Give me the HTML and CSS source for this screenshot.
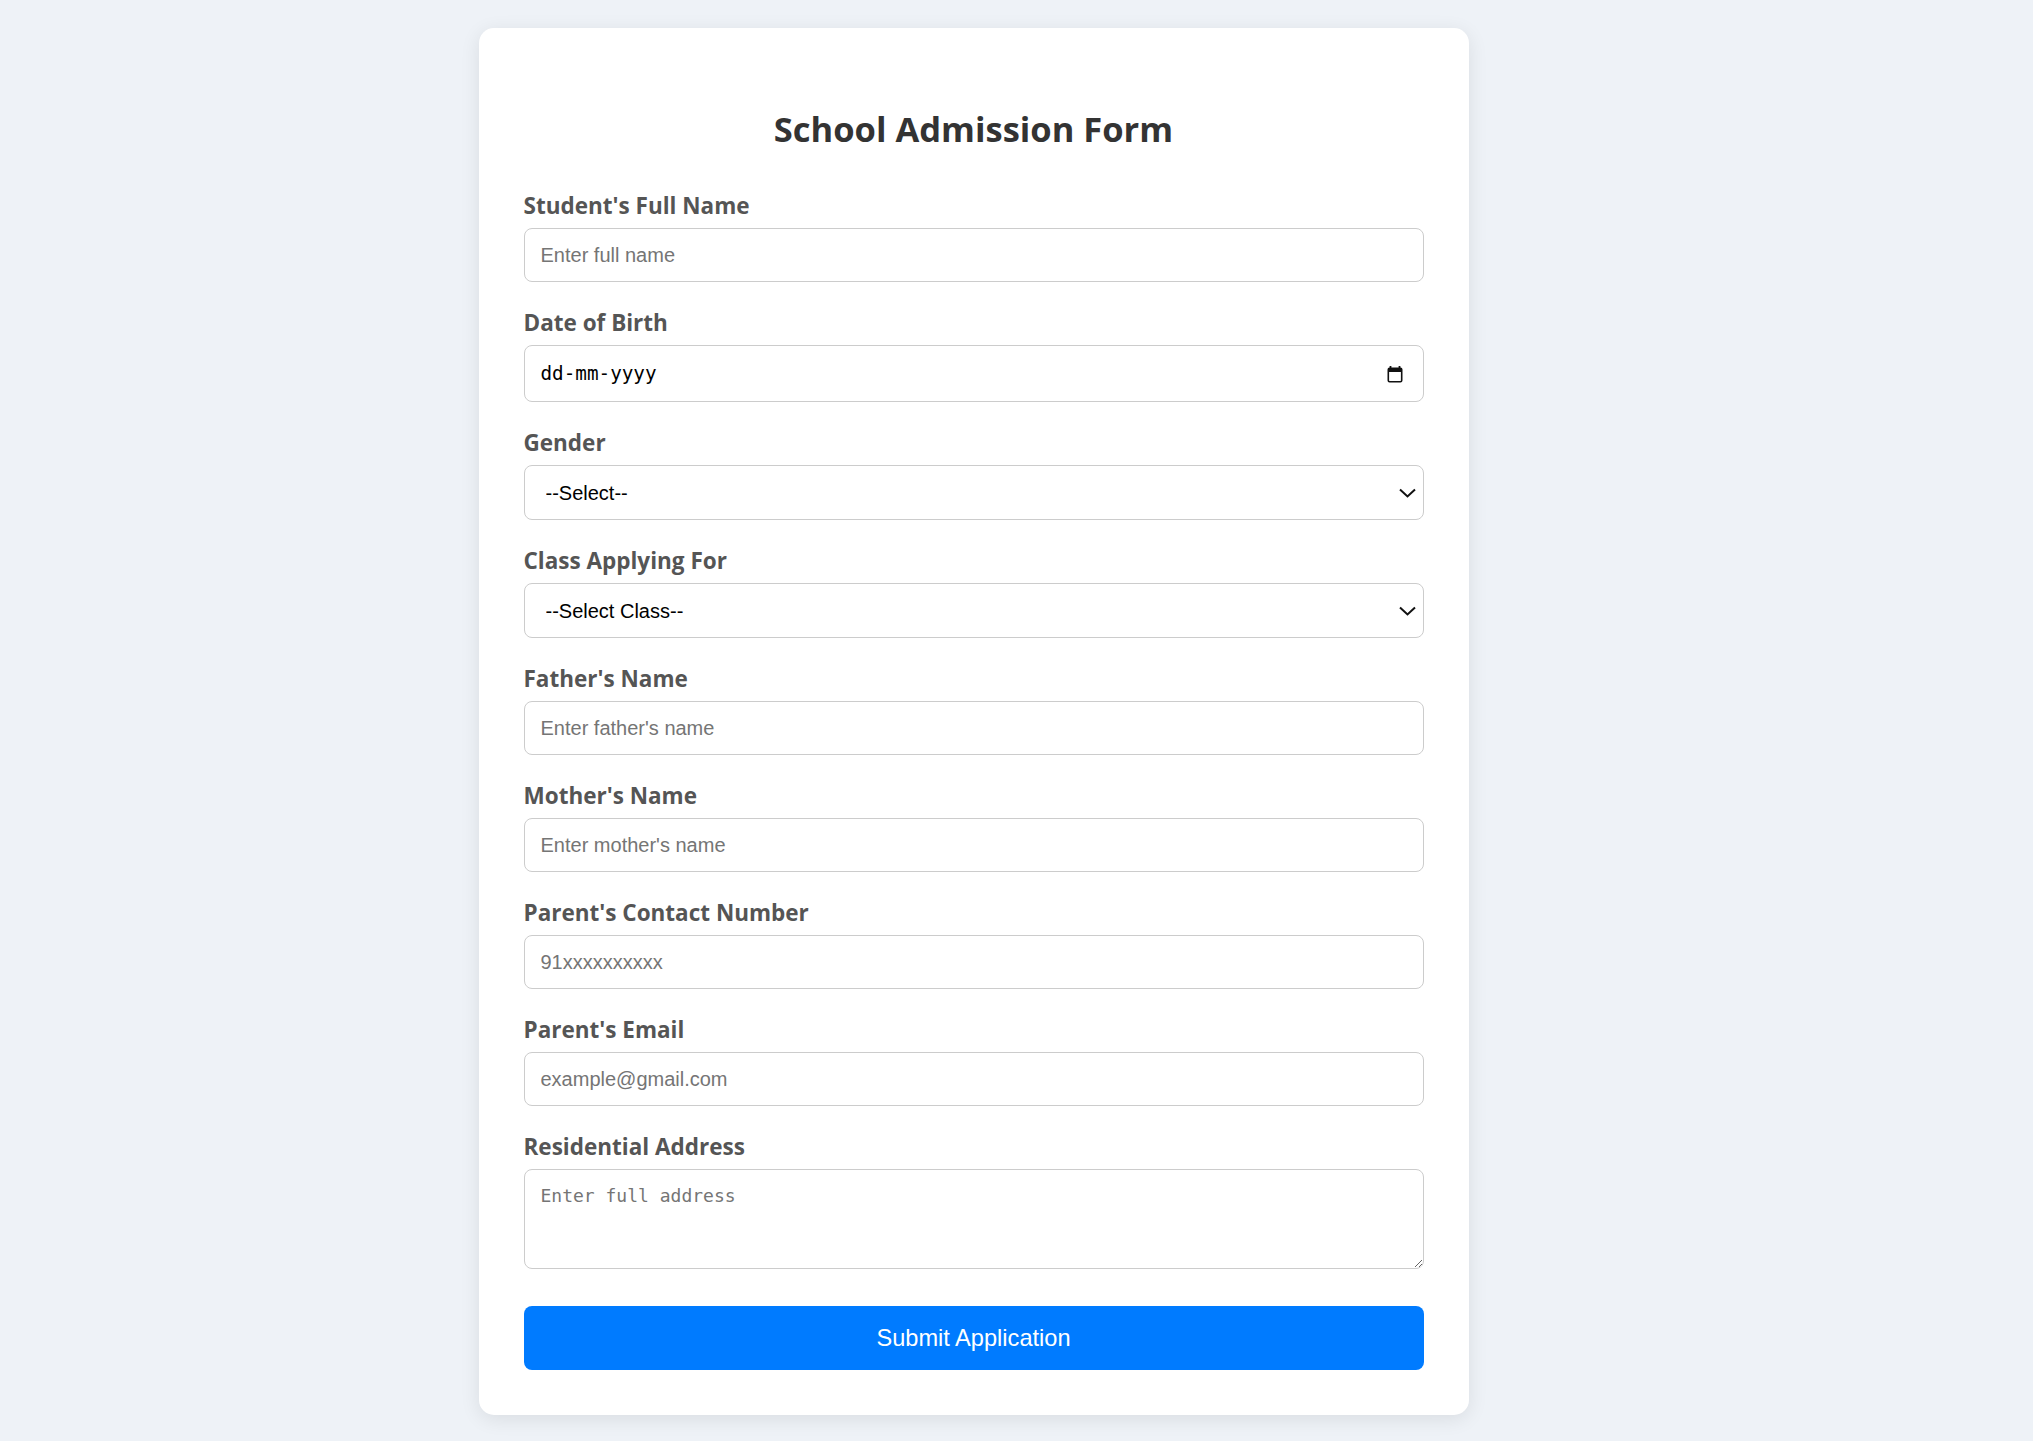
FILE: index.html
```html
<!DOCTYPE html>
<html lang="en">
<head>
<meta charset="utf-8">
<title>School Admission Form</title>
<link rel="stylesheet" href="styles.css">
</head>
<body>
<div class="card">
  <h2 class="title">School Admission Form</h2>
  <form class="form">
    <div class="group">
      <label class="label" for="name">Student's Full Name</label>
      <input class="field" id="name" type="text" placeholder="Enter full name">
    </div>
    <div class="group">
      <label class="label" for="dob">Date of Birth</label>
      <div class="wrap">
        <input class="field field-date" id="dob" type="text" placeholder="dd-mm-yyyy">
        <svg class="cal-icon" width="16" height="18" viewBox="0 0 16 18" aria-hidden="true">
          <rect x="1.3" y="3.3" width="13.4" height="13.4" rx="1.2" fill="none" stroke="#111" stroke-width="1.6"/>
          <rect x="1" y="3" width="14" height="4" fill="#111"/>
          <rect x="2.6" y="1" width="1.8" height="3" fill="#111"/>
          <rect x="11.6" y="1" width="1.8" height="3" fill="#111"/>
        </svg>
      </div>
    </div>
    <div class="group">
      <label class="label" for="gender">Gender</label>
      <div class="wrap">
        <select class="field field-select" id="gender">
          <option>--Select--</option>
          <option>Male</option>
          <option>Female</option>
          <option>Other</option>
        </select>
        <svg class="chevron" width="17" height="10" viewBox="0 0 17 10" aria-hidden="true">
          <path d="M1 1.5 L8.5 8.5 L16 1.5" fill="none" stroke="#111" stroke-width="2"/>
        </svg>
      </div>
    </div>
    <div class="group">
      <label class="label" for="class">Class Applying For</label>
      <div class="wrap">
        <select class="field field-select" id="class">
          <option>--Select Class--</option>
          <option>Nursery</option>
          <option>LKG</option>
          <option>UKG</option>
          <option>Class 1</option>
        </select>
        <svg class="chevron" width="17" height="10" viewBox="0 0 17 10" aria-hidden="true">
          <path d="M1 1.5 L8.5 8.5 L16 1.5" fill="none" stroke="#111" stroke-width="2"/>
        </svg>
      </div>
    </div>
    <div class="group">
      <label class="label" for="father">Father's Name</label>
      <input class="field" id="father" type="text" placeholder="Enter father's name">
    </div>
    <div class="group">
      <label class="label" for="mother">Mother's Name</label>
      <input class="field" id="mother" type="text" placeholder="Enter mother's name">
    </div>
    <div class="group">
      <label class="label" for="contact">Parent's Contact Number</label>
      <input class="field" id="contact" type="tel" placeholder="91xxxxxxxxxx">
    </div>
    <div class="group">
      <label class="label" for="email">Parent's Email</label>
      <input class="field" id="email" type="email" placeholder="example@gmail.com">
    </div>
    <div class="group">
      <label class="label" for="address">Residential Address</label>
      <textarea class="field field-area" id="address" placeholder="Enter full address"></textarea>
    </div>
    <button class="submit" type="button">Submit Application</button>
  </form>
</div>
</body>
</html>
```

FILE: styles.css
```css
html, body {
  margin: 0;
  padding: 0;
}

body {
  background: #eef2f7;
  display: flex;
  justify-content: center;
  padding: 28px 86px 26px 0;
  font-family: "Open Sans", "Noto Sans", sans-serif;
  box-sizing: border-box;
}

.card {
  width: 990px;
  box-sizing: border-box;
  padding: 45px;
  background: #ffffff;
  border-radius: 15px;
  box-shadow: 0 4px 20px rgba(0, 0, 0, 0.09);
}

.title {
  margin: 34.5px 0 42.5px;
  font-size: 34.5px;
  line-height: 42px;
  font-weight: 700;
  color: #333333;
  text-align: center;
}

.form {
  margin: 0;
}

.group {
  margin-bottom: 27px;
}

.label {
  display: block;
  font-size: 22.5px;
  line-height: 27px;
  font-weight: 700;
  color: #555555;
  margin-bottom: 9px;
}

.wrap {
  position: relative;
}

.field {
  display: block;
  width: 100%;
  height: 54px;
  box-sizing: border-box;
  margin: 0;
  padding: 0 15px 0 16px;
  border: 1px solid #cccccc;
  border-radius: 8px;
  background: #ffffff;
  font-family: "Liberation Sans", Arial, sans-serif;
  font-size: 20px;
  color: #000000;
  outline: none;
}

.field::placeholder {
  color: #757575;
  opacity: 1;
}

.field-date {
  height: 57px;
  font-family: "DejaVu Sans Mono", "Liberation Mono", monospace;
  font-size: 19.3px;
}

.field-date::placeholder {
  color: #000000;
}

.field-select {
  height: 55px;
  padding-left: 21px;
  -webkit-appearance: none;
  appearance: none;
  cursor: pointer;
}

.field-area {
  height: 100px;
  padding: 15px 15px 15px 16px;
  font-family: "DejaVu Sans Mono", "Liberation Mono", monospace;
  font-size: 18px;
  resize: vertical;
}

.cal-icon {
  position: absolute;
  right: 21px;
  top: 50%;
  transform: translateY(-50%);
  pointer-events: none;
}

.chevron {
  position: absolute;
  right: 8px;
  top: 50%;
  transform: translateY(-50%);
  pointer-events: none;
}

.submit {
  display: block;
  width: 100%;
  height: 64px;
  margin-top: 37px;
  border: none;
  border-radius: 8px;
  background: #007bff;
  color: #ffffff;
  font-family: "Liberation Sans", Arial, sans-serif;
  font-size: 23.6px;
  cursor: pointer;
}
```
